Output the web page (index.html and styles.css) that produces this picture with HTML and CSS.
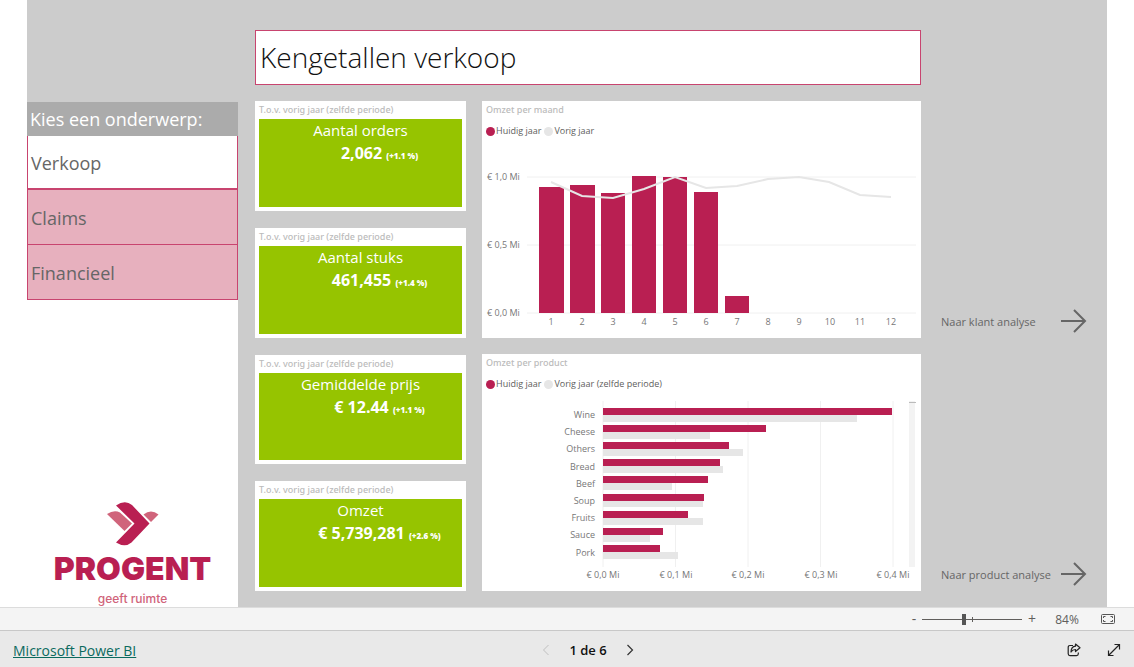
FILE: index.html
```html
<!DOCTYPE html>
<html lang="nl">
<head>
<meta charset="utf-8">
<title>Kengetallen verkoop</title>
<link rel="stylesheet" href="styles.css">
</head>
<body>
<main class="report">
  <aside class="sidebar">
    <h2 class="sidebar-title">Kies een onderwerp:</h2>
    <nav class="topics">
      <a class="topic topic-active" href="#verkoop">Verkoop</a>
      <a class="topic" href="#claims">Claims</a>
      <a class="topic" href="#financieel">Financieel</a>
    </nav>
    <div class="brand">
      <svg class="brand-mark" viewBox="0 0 52 44" aria-hidden="true">
        <path fill="#d0647b" d="M0 12Q7 7.500 13 10.500L25 21.500L17.500 29Z"/>
        <path fill="#d0647b" d="M36.500 12.500Q44 6.500 51.500 12.500L44 20Z"/>
        <path fill="#b91f52" d="M9 3.500Q18-2.500 25 3L42.500 21.500L24.500 40.500Q18 46 9 40.500L27.500 21.500Z"/>
      </svg>
      <span class="brand-name">PROGENT</span>
      <span class="brand-tag">geeft ruimte</span>
    </div>
  </aside>

  <div class="content">
    <h1 class="page-title">Kengetallen verkoop</h1>

    <div class="kpis">
      <section class="kpi">
        <h3 class="card-title">T.o.v. vorig jaar (zelfde periode)</h3>
        <div class="kpi-box"><p class="kpi-name">Aantal orders</p><p class="kpi-value">2,062 <small>(+1.1 %)</small></p></div>
      </section>
      <section class="kpi">
        <h3 class="card-title">T.o.v. vorig jaar (zelfde periode)</h3>
        <div class="kpi-box"><p class="kpi-name">Aantal stuks</p><p class="kpi-value">461,455 <small>(+1.4 %)</small></p></div>
      </section>
      <section class="kpi">
        <h3 class="card-title">T.o.v. vorig jaar (zelfde periode)</h3>
        <div class="kpi-box"><p class="kpi-name">Gemiddelde prijs</p><p class="kpi-value">€ 12.44 <small>(+1.1 %)</small></p></div>
      </section>
      <section class="kpi">
        <h3 class="card-title">T.o.v. vorig jaar (zelfde periode)</h3>
        <div class="kpi-box"><p class="kpi-name">Omzet</p><p class="kpi-value">€ 5,739,281 <small>(+2.6 %)</small></p></div>
      </section>
    </div>

    <section class="chart">
      <h3 class="card-title">Omzet per maand</h3>
      <ul class="legend"><li class="key key-now">Huidig jaar</li><li class="key key-prev">Vorig jaar</li></ul>
      <svg class="plot" viewBox="0 0 439 192" role="img" aria-label="Omzet per maand">
        <path class="grid" d="M45 32H434M45 100H434M45 168H434"/>
        <g class="now">
          <rect x="57" y="42" width="25" height="126"/>
          <rect x="88" y="40" width="25" height="128"/>
          <rect x="119" y="48" width="24" height="120"/>
          <rect x="150" y="31" width="24" height="137"/>
          <rect x="181" y="32" width="24" height="136"/>
          <rect x="212" y="47" width="24" height="121"/>
          <rect x="243" y="151" width="24" height="17"/>
        </g>
        <polyline class="trend" points="69,37 100,51 131,53 162,44 193,32 224,43 255,41 286,34 317,32 347,37 378,50 409,52"/>
        <g class="tick">
          <text x="5" y="35">€ 1,0 Mi</text><text x="5" y="103">€ 0,5 Mi</text><text x="5" y="171">€ 0,0 Mi</text>
        </g>
        <g class="tick mid">
          <text x="69" y="180">1</text><text x="100" y="180">2</text><text x="131" y="180">3</text><text x="162" y="180">4</text><text x="193" y="180">5</text><text x="224" y="180">6</text><text x="255" y="180">7</text><text x="286" y="180">8</text><text x="317" y="180">9</text><text x="348" y="180">10</text><text x="378" y="180">11</text><text x="409" y="180">12</text>
        </g>
      </svg>
    </section>
    <a class="jump" href="#klant">Naar klant analyse
      <svg class="arrow" viewBox="0 0 26 26" aria-hidden="true"><path d="M0 13H24M13 2L24 13L13 24"/></svg>
    </a>

    <section class="chart">
      <h3 class="card-title">Omzet per product</h3>
      <ul class="legend"><li class="key key-now">Huidig jaar</li><li class="key key-prev">Vorig jaar (zelfde periode)</li></ul>
      <svg class="plot" viewBox="0 0 439 192" role="img" aria-label="Omzet per product">
        <path class="grid" d="M121 3V169M193.500 3V169M266 3V169M338.500 3V169M411 3V169"/>
        <g class="prev">
          <rect x="121" y="17" width="254" height="7"/><rect x="121" y="34" width="107" height="7"/><rect x="121" y="51" width="140" height="7"/><rect x="121" y="68" width="120" height="7"/><rect x="121" y="85" width="69" height="7"/><rect x="121" y="102" width="100" height="7"/><rect x="121" y="120" width="100" height="7"/><rect x="121" y="137" width="47" height="7"/><rect x="121" y="154" width="75" height="7"/>
        </g>
        <g class="now">
          <rect x="121" y="10" width="289" height="7"/><rect x="121" y="27" width="163" height="7"/><rect x="121" y="44" width="126" height="7"/><rect x="121" y="61" width="117" height="7"/><rect x="121" y="78" width="105" height="7"/><rect x="121" y="96" width="101" height="7"/><rect x="121" y="113" width="85" height="7"/><rect x="121" y="130" width="60" height="7"/><rect x="121" y="147" width="57" height="7"/>
        </g>
        <g class="tick end">
          <text x="113" y="20">Wine</text><text x="113" y="37">Cheese</text><text x="113" y="54">Others</text><text x="113" y="72">Bread</text><text x="113" y="89">Beef</text><text x="113" y="106">Soup</text><text x="113" y="123">Fruits</text><text x="113" y="140">Sauce</text><text x="113" y="158">Pork</text>
        </g>
        <g class="tick mid">
          <text x="121" y="180">€ 0,0 Mi</text><text x="194" y="180">€ 0,1 Mi</text><text x="266" y="180">€ 0,2 Mi</text><text x="339" y="180">€ 0,3 Mi</text><text x="411" y="180">€ 0,4 Mi</text>
        </g>
        <rect class="scroll" x="427" y="3" width="6" height="166"/>
        <rect class="scroll-thumb" x="427" y="4" width="7" height="1"/>
      </svg>
    </section>
    <a class="jump" href="#product">Naar product analyse
      <svg class="arrow" viewBox="0 0 26 26" aria-hidden="true"><path d="M0 13H24M13 2L24 13L13 24"/></svg>
    </a>
  </div>
</main>

<div class="zoombar">
  <button class="zoom-step" type="button" aria-label="Uitzoomen">-</button>
  <input class="zoom-range" type="range" min="0" max="100" value="42" aria-label="Zoomniveau">
  <button class="zoom-step" type="button" aria-label="Inzoomen">+</button>
  <output class="zoom-value">84%</output>
  <button class="icon-button" type="button" aria-label="Aanpassen aan pagina">
    <svg width="14" height="10" viewBox="0 0 14 10" fill="none" stroke="#555"><rect x=".5" y=".5" width="13" height="9" rx="1"/><path d="M2.500 4V2.500H4.500M2.500 6V7.500H4.500M9.500 2.500H11.500V4M9.500 7.500H11.500V6"/></svg>
  </button>
</div>

<footer class="footer">
  <a class="product-link" href="#powerbi">Microsoft Power BI</a>
  <div class="pager">
    <button class="icon-button" type="button" aria-label="Vorige pagina" disabled>
      <svg width="8" height="12" viewBox="0 0 8 12" fill="none" stroke="#c0c0c0"><path d="M6.500 1L1.500 6L6.500 11"/></svg>
    </button>
    <span class="page-count">1 de 6</span>
    <button class="icon-button" type="button" aria-label="Volgende pagina">
      <svg width="8" height="12" viewBox="0 0 8 12" fill="none" stroke="#333" stroke-width="1.200"><path d="M1.500 1L6.500 6L1.500 11"/></svg>
    </button>
  </div>
  <div class="tools">
    <button class="icon-button" type="button" aria-label="Delen">
      <svg width="14" height="14" viewBox="0 0 14 14" fill="none" stroke="#222" stroke-width="1.200"><path d="M6 2.500H3Q1.200 2.500 1.200 4.300V10.800Q1.200 12.600 3 12.600H9.500Q11.300 12.600 11.300 10.800V9.500"/><path stroke-linejoin="round" d="M8.500 1L13 4.800L8.500 8.500V6.500Q5.500 6.500 4 9Q4.200 3.700 8.500 3.200Z"/></svg>
    </button>
    <button class="icon-button" type="button" aria-label="Volledig scherm">
      <svg width="14" height="14" viewBox="0 0 14 14" fill="none" stroke="#222" stroke-width="1.200"><path d="M1.500 12.500L12.500 1.500M7.500 1.500H12.500V6.500M1.500 7.500V12.500H6.500"/></svg>
    </button>
  </div>
</footer>
</body>
</html>
```
FILE: styles.css
```css
* { box-sizing: border-box; }

body {
  margin: 0;
  min-height: 100vh;
  display: flex;
  flex-direction: column;
  background: #fff;
  color: #605e5c;
  font-family: "Open Sans", "Noto Sans", sans-serif;
}

h1, h2, h3, p, ul { margin: 0; padding: 0; font-weight: 400; }
ul { list-style: none; }
a { color: inherit; text-decoration: none; }
button { border: 0; padding: 0; background: none; color: inherit; font: inherit; }
svg { display: block; }

.report {
  flex: 1;
  display: flex;
  margin: 0 27px;
  background: #ccc;
}

.sidebar {
  width: 211px;
  margin-top: 102px;
  display: flex;
  flex-direction: column;
  background: #fff;
}

.sidebar-title {
  padding-left: 3px;
  background: #ababab;
  color: #fff;
  font-size: 18px;
  line-height: 34px;
}

.topics { display: flex; flex-direction: column; }

.topic {
  padding: 2px 0 0 3px;
  border: 1px solid #c8446f;
  border-top-width: 0;
  background: #e7b0be;
  color: #666;
  font-size: 18px;
  line-height: 52px;
}

.topic-active { background: #fff; border-bottom-width: 2px; line-height: 50px; }

.brand {
  flex: 1;
  display: flex;
  flex-direction: column;
  align-items: center;
  justify-content: flex-end;
  padding-bottom: 2px;
  font-family: Inter, sans-serif;
}

.brand-mark { width: 52px; height: 44px; }
.brand-name { color: #b91f52; font-size: 32px; font-weight: 900; line-height: 46px; }
.brand-tag { color: #d0647b; font-size: 12px; font-weight: 500; line-height: 13px; }

.content {
  flex: 1;
  min-width: 0;
  display: grid;
  grid-template-columns: 211px minmax(0, 1fr) 150px;
  align-content: start;
  gap: 16px;
  padding: 30px 20px 16px 17px;
}

.page-title {
  grid-column: 1 / 3;
  padding-left: 4px;
  border: 1px solid #c8446f;
  background: #fff;
  color: #111;
  font-size: 28px;
  font-weight: 300;
  line-height: 53px;
}

.kpis {
  grid-column: 1;
  grid-row: 2 / 4;
  display: flex;
  flex-direction: column;
  gap: 17px;
}

.kpi {
  flex: 1;
  display: flex;
  flex-direction: column;
  padding: 0 4px 4px;
  background: #fff;
}

.card-title {
  margin-bottom: 1px;
  color: #bbb;
  font-family: "Noto Sans", "Open Sans", sans-serif;
  font-size: 9px;
  font-weight: 500;
  line-height: 17px;
}

.kpi-box {
  flex: 1;
  background: #96c400;
  color: #fff;
  text-align: center;
}

.kpi-name { font-size: 15px; line-height: 22px; }
.kpi-value { padding-left: 38px; font-size: 16px; font-weight: 700; line-height: 24px; }
.kpi-value small { font-size: 8px; font-weight: 800; }

.chart { grid-column: 2; padding-bottom: 1px; background: #fff; }
.chart .card-title { padding-left: 4px; }

.legend {
  display: flex;
  gap: 3px;
  padding: 0 0 2px 4px;
  font-size: 9px;
  line-height: 24px;
}

.key { display: flex; align-items: center; gap: 1px; }
.key::before { content: ""; width: 9px; height: 9px; border-radius: 50%; }
.key-now::before { background: #b91f52; }
.key-prev::before { background: #e6e6e6; }

.plot { width: 100%; height: auto; }
.grid { fill: none; stroke: #f0f0f0; }
.now { fill: #b91f52; }
.prev { fill: #e6e6e6; }
.trend { fill: none; stroke: #e6e6e6; stroke-width: 2px; }
.tick { fill: #777; font-size: 9px; }
.mid { text-anchor: middle; }
.end { text-anchor: end; }
.scroll { fill: #f3f3f3; }
.scroll-thumb { fill: #bbb; }

.jump {
  grid-column: 3;
  align-self: end;
  display: flex;
  align-items: center;
  justify-content: space-between;
  padding: 0 0 4px 4px;
  color: #666;
  font-size: 11px;
}

.arrow { width: 26px; height: 26px; fill: none; stroke: #666; stroke-width: 2px; }

.zoombar {
  height: 23px;
  display: flex;
  align-items: center;
  justify-content: flex-end;
  padding-right: 19px;
  border-top: 1px solid #dcdcdc;
  background: #f4f4f4;
}

.zoom-step { width: 10px; font-size: 14px; line-height: 20px; }

.zoom-range {
  appearance: none;
  width: 100px;
  height: 12px;
  margin: 0 5px 0 3px;
  background:
    linear-gradient(#605e5c, #605e5c) 50px 50% / 1px 5px no-repeat,
    linear-gradient(#605e5c, #605e5c) 0 50% / 100% 1px no-repeat;
}

.zoom-range::-webkit-slider-thumb { appearance: none; width: 4px; height: 11px; background: #555; }
.zoom-range::-moz-range-thumb { width: 4px; height: 11px; border: 0; border-radius: 0; background: #555; }
.zoom-value { width: 30px; margin: 0 19px 0 15px; text-align: center; font-size: 12px; }

.footer {
  display: grid;
  grid-template-columns: 1fr auto 1fr;
  align-items: center;
  height: 37px;
  padding: 2px 13px 0;
  border-top: 1px solid #c8c8c8;
  background: #e9e9e9;
}

.product-link { justify-self: start; color: #0b6a5e; font-size: 14px; text-decoration: underline; }
.pager { display: flex; align-items: center; gap: 19px; padding-left: 42px; }
.page-count { color: #111; font-size: 13px; font-weight: 600; }
.tools { justify-self: end; display: flex; gap: 26px; }
```
